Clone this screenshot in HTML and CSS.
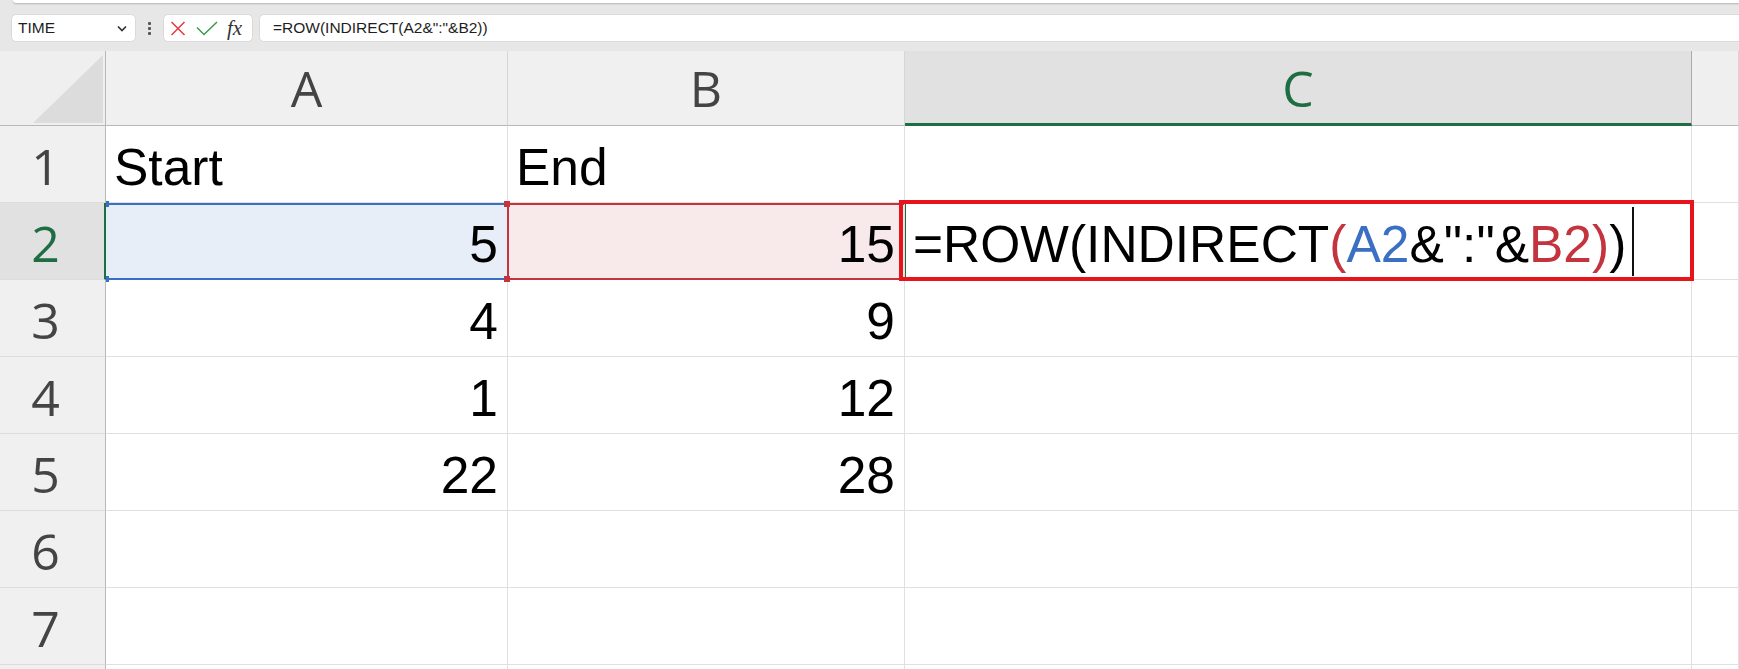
FILE: index.html
```html
<!DOCTYPE html>
<html lang="en">
<head>
  <meta charset="UTF-8" />
  <title>ROW INDIRECT</title>
  <link rel="stylesheet" href="styles.css">
</head>
<body>

  <div class="ribbon-edge"></div>

  <div class="toolbar">
    <div class="namebox">
      <span>TIME</span>
      <svg width="10" height="7" viewBox="0 0 10 7"><path d="M1 1.5 L5 5.5 L9 1.5" fill="none" stroke="#333" stroke-width="1.7"/></svg>
    </div>
    <div class="grip"><i></i><i></i><i></i></div>
    <div class="fxbox">
      <svg width="16" height="15" viewBox="0 0 16 15"><path d="M1.5 1 L14.5 14 M14.5 1 L1.5 14" fill="none" stroke="#e5393e" stroke-width="1.5"/></svg>
      <svg width="22" height="15" viewBox="0 0 22 15"><path d="M1 6.5 L8 13.5 L21 1" fill="none" stroke="#3f9b52" stroke-width="1.6"/></svg>
      <span class="fx">fx</span>
    </div>
    <div class="formula"><span>=ROW(INDIRECT(A2&amp;":"&amp;B2))</span></div>
  </div>

  <div class="sheet">
    <div class="corner"><div class="tri"></div></div>
    <div class="colhead">A</div>
    <div class="colhead">B</div>
    <div class="colhead sel">C</div>
    <div class="colhead last"></div>

    <div class="rowhead">1</div>
    <div class="cell text"><span>Start</span></div>
    <div class="cell text"><span>End</span></div>
    <div class="cell"></div>
    <div class="cell"></div>

    <div class="rowhead sel">2</div>
    <div class="cell ref-a">
      <div class="range blue"></div>
      <i class="dot blue-dot top-left"></i><i class="dot blue-dot bottom-left"></i>
      <span>5</span>
    </div>
    <div class="cell ref-b">
      <div class="range red"></div>
      <i class="dot red-dot top-left"></i><i class="dot red-dot bottom-left"></i>
      <span>15</span>
    </div>
    <div class="cell text editing">
      <span>=ROW(INDIRECT<span class="c-red">(</span><span class="c-blue">A2</span>&amp;":"&amp;<span class="c-red">B2)</span>)</span>
      <div class="edit-box"></div>
      <div class="caret"></div>
    </div>
    <div class="cell"></div>

    <div class="rowhead">3</div>
    <div class="cell"><span>4</span></div>
    <div class="cell"><span>9</span></div>
    <div class="cell"></div>
    <div class="cell"></div>

    <div class="rowhead">4</div>
    <div class="cell"><span>1</span></div>
    <div class="cell"><span>12</span></div>
    <div class="cell"></div>
    <div class="cell"></div>

    <div class="rowhead">5</div>
    <div class="cell"><span>22</span></div>
    <div class="cell"><span>28</span></div>
    <div class="cell"></div>
    <div class="cell"></div>

    <div class="rowhead">6</div>
    <div class="cell"></div>
    <div class="cell"></div>
    <div class="cell"></div>
    <div class="cell"></div>

    <div class="rowhead">7</div>
    <div class="cell"></div>
    <div class="cell"></div>
    <div class="cell"></div>
    <div class="cell"></div>

    <div class="rowhead"></div>
    <div class="cell"></div>
    <div class="cell"></div>
    <div class="cell"></div>
    <div class="cell"></div>
  </div>

</body>
</html>
```

FILE: styles.css
```css
* { box-sizing: border-box; }
html, body { height: 669px; overflow: hidden; }
body { margin: 0; background: #e7e7e7; font-family: "Liberation Sans", Arial, sans-serif; }

/* formula bar */
.ribbon-edge { height: 3px; margin-left: 13px; background: #fff; border-bottom-left-radius: 6px; box-shadow: 0 1px 2px rgba(0,0,0,.22); }
.toolbar { display: flex; align-items: center; padding: 11px 0 9px 11px; }
.namebox { width: 125px; height: 28px; background: #fff; border: 1px solid #dadada; border-radius: 5px; display: flex; align-items: center; justify-content: space-between; padding: 0 8px 0 6px; font-size: 15.5px; color: #1e1e1e; }
.grip { width: 27px; display: flex; flex-direction: column; align-items: center; gap: 2px; }
.grip i { width: 3px; height: 3px; background: #555; border-radius: 1px; }
.fxbox { width: 90px; height: 28px; background: #fff; border: 1px solid #dadada; border-radius: 5px; display: flex; align-items: center; padding-left: 6px; gap: 10px; }
.fx { font-family: "Liberation Serif", serif; font-style: italic; font-size: 21px; color: #333; margin-left: -1px; }
.formula { flex: 1; height: 28px; margin-left: 6px; background: #fff; border: 1px solid #dadada; border-right: 0; border-radius: 5px 0 0 5px; padding-left: 13px; display: flex; align-items: center; font-size: 15.5px; color: #1e1e1e; white-space: nowrap; }

/* grid */
.sheet { display: grid; height: 618px; overflow: hidden; grid-template-columns: 106px 402px 397px 787px 1fr; grid-template-rows: 75px repeat(8, 77px); }

.corner { background: #efefef; border-right: 1px solid #b8b8b8; border-bottom: 1px solid #b8b8b8; display: flex; justify-content: flex-end; align-items: flex-end; padding: 0 2px 2px 0; }
.tri { width: 70px; height: 68px; background: #dcdcdc; clip-path: polygon(100% 0, 100% 100%, 0 100%); }

.colhead { background: #f0f0f0; border-right: 1px solid #d6d6d6; border-bottom: 1px solid #b8b8b8; display: flex; align-items: center; justify-content: center; font: 50px/1 "Open Sans", sans-serif; color: #444; }
.colhead.sel { background: #e1e1e1; color: #1f6e43; border-bottom: 3px solid #1f6e43; border-right-color: #aaaaaa; padding-top: 2px; }
.colhead.last { background: #efefef; }

.rowhead { background: #f0f0f0; border-right: 1px solid #b8b8b8; border-bottom: 1px solid #dcdcdc; display: flex; align-items: center; justify-content: center; padding: 3px 14px 0 0; font: 50px/1 "Open Sans", sans-serif; color: #444; }
.rowhead.sel { background: #e1e1e1; color: #1f6e43; border-right: 2px solid #1f6e43; padding-right: 13px; }

.cell { position: relative; background: #fff; border-right: 1px solid #e0e0e0; border-bottom: 1px solid #e0e0e0; display: flex; align-items: flex-end; justify-content: flex-end; padding: 0 9px 9px; font-size: 51.5px; line-height: 1; color: #000; white-space: nowrap; }
.cell.text { justify-content: flex-start; padding-left: 8px; }

/* reference highlights */
.ref-a { background: #e8eef8; }
.ref-b { background: #f8e9ea; }
.range { position: absolute; top: 0; bottom: -1px; left: 0; right: 0; border-top: 2px solid; border-bottom: 2px solid; }
.range.blue { border-color: #3a6fc4; }
.range.red { border-color: #c3343f; border-left: 2px solid #c3343f; left: -1px; }
.dot { position: absolute; width: 6px; height: 6px; z-index: 2; }
.red-dot { background: #c3343f; left: -4px; }
.blue-dot { background: #3a6fc4; width: 3px; left: 0; }
.top-left { top: -2px; }
.bottom-left { bottom: -3px; }

.c-red { color: #c3343f; }
.c-blue { color: #3a6fc4; }

.editing { z-index: 3; box-shadow: inset 1px 0 #1f6e43; }
.edit-box { position: absolute; top: -3px; left: -6px; right: -3px; bottom: -2px; border: 4px solid #e8131b; }
.caret { position: absolute; left: 727px; top: 4px; bottom: 3px; width: 1.5px; background: #111; }
```
